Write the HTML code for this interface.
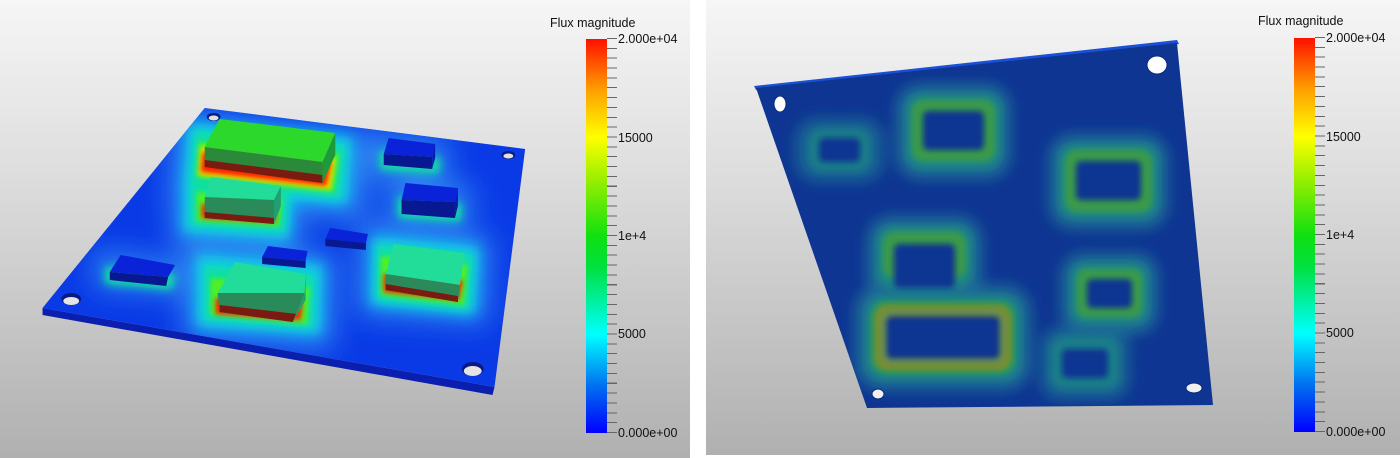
<!DOCTYPE html>
<html><head><meta charset="utf-8"><style>
html,body{margin:0;padding:0;background:#fff;}
body{width:1400px;height:458px;position:relative;overflow:hidden;font-family:"Liberation Sans",sans-serif;}
.panel{position:absolute;top:0;background:linear-gradient(#f6f6f6,#dcdcdc 40%,#b0b0b0 100%);}
.cb{position:absolute;width:21px;height:394px;background:linear-gradient(to top,#0000ff 0%,#0070f0 12%,#00ffff 25%,#00e040 42%,#10e010 50%,#a0f000 65%,#ffff00 75%,#ffa000 87%,#ff1000 100%);}
.tk{position:absolute;width:10px;height:395px;background:repeating-linear-gradient(to bottom,#666 0 1px,transparent 1px 9.85px);}
.lb{position:absolute;font-size:12.5px;color:#111;line-height:14px;}
.tt{position:absolute;font-size:12.5px;color:#111;}
</style></head><body>

<div class="panel" style="left:0;width:690px;height:458px;">
<svg width="690" height="458" style="position:absolute;left:0;top:0">
<defs>
<clipPath id="pl"><polygon points="207,108 531,149 500,387 43,308"/></clipPath>
<filter id="b14" x="-50%" y="-50%" width="200%" height="200%"><feGaussianBlur stdDeviation="14"/></filter>
<filter id="b8" x="-50%" y="-50%" width="200%" height="200%"><feGaussianBlur stdDeviation="7"/></filter>
<filter id="b4" x="-50%" y="-50%" width="200%" height="200%"><feGaussianBlur stdDeviation="4.5"/></filter>
<filter id="b2" x="-50%" y="-50%" width="200%" height="200%"><feGaussianBlur stdDeviation="2.5"/></filter>
</defs>
<g transform="scale(0.989 1)">
<polygon points="43,308 500,387 498,395 43,315" fill="#0a1fb0"/>
<polygon points="207,108 531,149 500,387 43,308" fill="#0a3ae6"/>
<g clip-path="url(#pl)">
<g filter="url(#b14)" fill="#2a80f0">
<polygon points="175,110 375,132 370,220 170,210"/>
<polygon points="175,165 305,176 303,250 173,243"/>
<polygon points="185,240 340,254 337,350 185,340"/>
<polygon points="363,222 497,236 493,325 361,315"/>
<polygon points="375,130 455,140 452,180 372,176"/>
<polygon points="395,175 478,185 475,228 392,222"/>
<polygon points="95,250 190,262 185,295 95,288"/>
</g>
<g filter="url(#b8)" fill="#10d0e8">
<polygon points="190,122 357,137 352,205 184,192"/>
<polygon points="186,174 297,182 293,240 184,233"/>
<polygon points="198,254 327,264 325,335 198,327"/>
<polygon points="376,236 485,246 481,315 374,305"/>
</g>
<g filter="url(#b4)" fill="#10e0a0">
<polygon points="197,131 349,145 344,198 193,183"/>
<polygon points="193,181 291,189 288,232 193,226"/>
<polygon points="207,265 318,275 316,328 207,320"/>
<polygon points="381,245 478,255 474,310 381,300"/>
<polygon points="384,150 446,158 444,174 384,170"/>
<polygon points="402,196 468,204 466,222 402,218"/>
<polygon points="106,266 178,274 174,290 106,284"/>
</g>
<g filter="url(#b2)" fill="#50f020">
<polygon points="201,142 343,154 337,192 199,177"/>
<polygon points="199,192 285,199 282,226 199,221"/>
<polygon points="213,278 313,287 310,324 213,315"/>
<polygon points="385,256 473,265 469,305 385,295"/>
</g>
<g filter="url(#b2)" fill="#f0e000">
<polygon points="203,147 339,158 334,189 201,175"/>
</g>
<g filter="url(#b2)" fill="#ff2000">
<polygon points="205,152 335,162 330,186 203,172"/>
<polygon points="204,204 280,208 278,222 204,218"/>
<polygon points="218,298 306,302 304,320 218,314"/>
<polygon points="388,274 468,280 464,300 388,292"/>
</g>
</g>
<ellipse cx="216" cy="117" rx="7" ry="4" fill="#0a1a80"/><ellipse cx="216" cy="118" rx="5" ry="2.5" fill="#e0e0e0"/>
<ellipse cx="514" cy="155" rx="7" ry="4" fill="#0a1a80"/><ellipse cx="514" cy="156" rx="5" ry="2.5" fill="#e0e0e0"/>
<ellipse cx="72" cy="299" rx="10" ry="6" fill="#0a1a80"/><ellipse cx="72" cy="301" rx="8" ry="4" fill="#e4e4e4"/>
<ellipse cx="478" cy="369" rx="11" ry="7" fill="#0a1a80"/><ellipse cx="478" cy="371" rx="9" ry="5" fill="#e4e4e4"/>
<g>
<polygon points="393,138 440,144 437,157 388,154" fill="#0a22d8"/><polygon points="388,154 437,157 437,169 388,165" fill="#081890"/><polygon points="440,144 437,157 437,169 440,158" fill="#0a1ab0"/>
<polygon points="410,183 463,188 460,202 406,200" fill="#0a22d8"/><polygon points="406,200 460,202 460,218 406,214" fill="#081890"/><polygon points="463,188 460,202 460,218 463,206" fill="#0a1ab0"/>
<polygon points="334,228 372,234 370,243 329,239" fill="#0a22d8"/><polygon points="329,239 370,243 370,250 329,246" fill="#081890"/>
<polygon points="271,246 311,251 309,261 265,257" fill="#0a22d8"/><polygon points="265,257 309,261 309,268 265,264" fill="#081890"/>
<polygon points="122,255 177,265 170,277 111,272" fill="#0a22d8"/><polygon points="111,272 170,277 168,286 111,280" fill="#081890"/>
</g>
<polygon points="222,119 339,133 326,162 207,147" fill="#2cd82c"/>
<polygon points="207,147 326,162 326,183 207,167" fill="#2a8a3a"/>
<polygon points="207,160 326,175 326,183 207,167" fill="#7a1a10"/>
<polygon points="339,133 326,162 326,183 339,155" fill="#1f9a3a"/>
<polygon points="213,177 284,186 277,200 207,197" fill="#22dc9a"/>
<polygon points="207,197 277,200 277,224 207,218" fill="#2a8a5a"/>
<polygon points="207,212 277,218 277,224 207,218" fill="#7a1a10"/>
<polygon points="284,186 277,200 277,224 284,206" fill="#20a070"/>
<polygon points="238,262 309,274 308,293 220,293" fill="#22dc9a"/>
<polygon points="220,293 308,293 296,322 222,312" fill="#2a8a5a"/>
<polygon points="222,305 300,314 296,322 222,312" fill="#7a1a10"/>
<polygon points="309,274 308,293 296,322 309,300" fill="#20a070"/>
<polygon points="398,244 470,253 465,285 390,274" fill="#22dc9a"/>
<polygon points="390,274 465,285 463,302 390,290" fill="#2a8a5a"/>
<polygon points="390,284 463,296 463,302 390,290" fill="#7a1a10"/>
</g>
</svg>
<div class="tt" style="left:550px;top:16px">Flux magnitude</div>
<div class="cb" style="left:586px;top:39px"></div>
<div class="tk" style="left:607px;top:38px"></div>
<div class="lb" style="left:618px;top:32px">2.000e+04</div>
<div class="lb" style="left:618px;top:131px">15000</div>
<div class="lb" style="left:618px;top:229px">1e+4</div>
<div class="lb" style="left:618px;top:327px">5000</div>
<div class="lb" style="left:618px;top:426px">0.000e+00</div>
</div>

<div class="panel" style="left:706px;width:694px;height:455px;">
<svg width="694" height="455" style="position:absolute;left:0;top:0">
<defs>
<clipPath id="pr"><polygon points="50,88 471,43 507,405 161,408"/></clipPath>
<filter id="c8" x="-50%" y="-50%" width="200%" height="200%"><feGaussianBlur stdDeviation="7"/></filter>
<filter id="c5" x="-50%" y="-50%" width="200%" height="200%"><feGaussianBlur stdDeviation="4.5"/></filter>
<filter id="c3" x="-50%" y="-50%" width="200%" height="200%"><feGaussianBlur stdDeviation="3"/></filter>
</defs>
<polygon points="48,86 471,40 473,44 50,90" fill="#1a50d8"/>
<polygon points="50,88 471,43 507,405 161,408" fill="#0e3592"/>
<g clip-path="url(#pr)">
<g transform="translate(-706 0)">
<g filter="url(#c8)" fill="#1a6a96">
<rect x="795" y="118" width="89" height="64" rx="22" opacity="0.8"/>
<rect x="896" y="84" width="115" height="95" rx="24"/>
<rect x="1049" y="134" width="119" height="95" rx="24"/>
<rect x="867" y="216" width="115" height="85" rx="24"/>
<rect x="1061" y="253" width="97" height="81" rx="22"/>
<rect x="855" y="285" width="176" height="105" rx="26"/>
<rect x="1040" y="327" width="90" height="73" rx="20" opacity="0.8"/>
</g>
<g filter="url(#c5)" fill="#1e8a82">
<rect x="808" y="128" width="63" height="44" rx="14" opacity="0.7"/>
<rect x="906" y="94" width="95" height="74" rx="16"/>
<rect x="1059" y="144" width="99" height="74" rx="16"/>
<rect x="877" y="226" width="95" height="62" rx="16"/>
<rect x="1071" y="263" width="77" height="60" rx="14"/>
<rect x="866" y="296" width="154" height="83" rx="18"/>
<rect x="1050" y="336" width="70" height="54" rx="14" opacity="0.7"/>
</g>
<g filter="url(#c3)" fill="#3a9a48">
<rect x="912" y="100" width="83" height="61" rx="12"/>
<rect x="1065" y="150" width="87" height="62" rx="12"/>
<rect x="883" y="232" width="83" height="46" rx="12"/>
<rect x="1077" y="269" width="65" height="48" rx="10"/>
<rect x="872" y="302" width="142" height="71" rx="14"/>
</g>
<rect x="876" y="306" width="134" height="63" rx="12" fill="#8c8a28" filter="url(#c3)"/>
<g fill="#0e3592" filter="url(#c3)">
<rect x="923" y="111" width="61" height="39" rx="5"/>
<rect x="1076" y="161" width="65" height="39" rx="5"/>
<rect x="894" y="244" width="61" height="44" rx="5"/>
<rect x="1087" y="279" width="45" height="29" rx="5"/>
<rect x="886" y="316" width="114" height="43" rx="6"/>
<rect x="1062" y="349" width="46" height="29" rx="5"/>
<rect x="819" y="138" width="41" height="24" rx="5"/>
</g>
<rect x="883" y="312" width="120" height="50" rx="7" fill="none" stroke="#1a9aa0" stroke-width="2" filter="url(#c3)"/>
</g>
</g>
<ellipse cx="74" cy="104" rx="6" ry="8" fill="#fff" stroke="#0a2a80" stroke-width="1"/>
<ellipse cx="451" cy="65" rx="10" ry="9" fill="#fff" stroke="#0a2a80" stroke-width="1"/>
<ellipse cx="172" cy="394" rx="6" ry="5" fill="#f0f0f0" stroke="#0a2a80" stroke-width="1"/>
<ellipse cx="488" cy="388" rx="8" ry="5" fill="#f0f0f0" stroke="#0a2a80" stroke-width="1"/>
</svg>
<div class="tt" style="left:552px;top:14px">Flux magnitude</div>
<div class="cb" style="left:588px;top:38px"></div>
<div class="tk" style="left:609px;top:37px"></div>
<div class="lb" style="left:620px;top:31px">2.000e+04</div>
<div class="lb" style="left:620px;top:130px">15000</div>
<div class="lb" style="left:620px;top:228px">1e+4</div>
<div class="lb" style="left:620px;top:326px">5000</div>
<div class="lb" style="left:620px;top:425px">0.000e+00</div>
</div>
</body></html>
